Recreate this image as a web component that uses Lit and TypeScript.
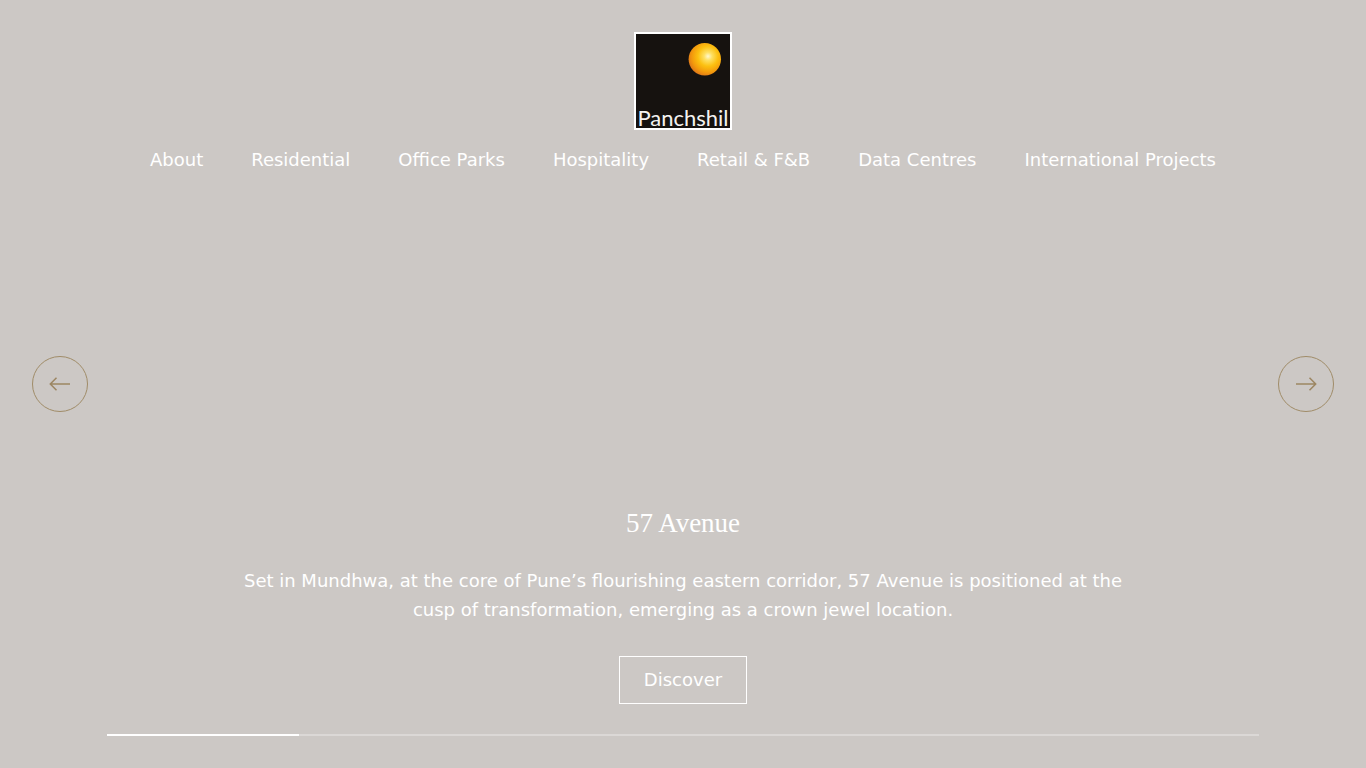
import { LitElement, html, css, svg } from "lit";
import { customElement, state } from "lit/decorators.js";

const LINKS = [
  "About",
  "Residential",
  "Office Parks",
  "Hospitality",
  "Retail & F&B",
  "Data Centres",
  "International Projects",
];

const SLIDE_COUNT = 6;

@customElement("site-header")
class SiteHeader extends LitElement {
  static styles = css`
    :host {
      display: block;
      padding-top: 32px;
    }
    .home {
      display: block;
      width: 98px;
      margin: 0 auto;
    }
    .logo {
      display: block;
      width: 98px;
      height: 98px;
    }
    .wordmark {
      font-family: Lato, "Open Sans", sans-serif;
      font-size: 22px;
      fill: #f4f2f0;
    }
    .links {
      display: flex;
      flex-wrap: wrap;
      justify-content: center;
      column-gap: 48px;
      margin: 16px 0 0;
      padding: 0;
      list-style: none;
      line-height: 28px;
    }
    .link {
      color: #fff;
      font-size: 18px;
      text-decoration: none;
    }
  `;

  render() {
    return html`
      <a class="home" href="#" aria-label="Panchshil home">
        <svg class="logo" viewBox="0 0 98 98" aria-hidden="true">
          <defs>
            <radialGradient id="sun" cx="0.6" cy="0.41" r="0.62">
              <stop offset="0" stop-color="#fff8d0" />
              <stop offset="0.2" stop-color="#fee063" />
              <stop offset="0.5" stop-color="#fcc010" />
              <stop offset="0.8" stop-color="#f39a0c" />
              <stop offset="1" stop-color="#e07a18" />
            </radialGradient>
          </defs>
          <rect width="98" height="98" fill="#fff" />
          <rect x="2" y="2" width="94" height="94" fill="#16120f" />
          <circle cx="70.8" cy="27.2" r="16.2" fill="url(#sun)" />
          <text class="wordmark" x="49" y="94" text-anchor="middle">Panchshil</text>
        </svg>
      </a>
      <nav aria-label="Main">
        <ul class="links">
          ${LINKS.map((t) => html`<li><a class="link" href="#">${t}</a></li>`)}
        </ul>
      </nav>
    `;
  }
}

@customElement("app-root")
class AppRoot extends LitElement {
  static styles = css`
    :host {
      display: block;
      font-family: "DejaVu Sans", sans-serif;
      font-size: 18px;
      color: #fff;
      background: #ccc8c5;
    }
    .hero {
      position: relative;
      box-sizing: border-box;
      min-height: 100vh;
      display: flex;
      flex-direction: column;
      justify-content: space-between;
      padding-bottom: 32px;
    }
    .slide {
      display: flex;
      flex-direction: column;
      align-items: center;
      padding: 0 107px;
      text-align: center;
    }
    .title {
      margin: 0;
      font-family: "Liberation Serif", serif;
      font-size: 27px;
      font-weight: 400;
      line-height: 34px;
    }
    .copy {
      max-width: 900px;
      margin: 26px 0 32px;
      line-height: 29px;
    }
    .discover {
      padding: 0 24px;
      border: 1px solid #fff;
      color: inherit;
      line-height: 46px;
      text-decoration: none;
    }
    .track {
      align-self: stretch;
      height: 2px;
      margin-top: 30px;
      background: #dbd8d6;
    }
    .bar {
      height: 2px;
      background: #fff;
    }
    .arrows {
      position: absolute;
      inset: 0 32px;
      display: flex;
      align-items: center;
      justify-content: space-between;
      pointer-events: none;
    }
    .arrow {
      display: grid;
      place-items: center;
      box-sizing: border-box;
      width: 56px;
      height: 56px;
      padding: 0;
      border: 1px solid #a08c68;
      border-radius: 50%;
      background: none;
      color: #9c8662;
      cursor: pointer;
      pointer-events: auto;
    }
    .glyph {
      display: block;
      width: 24px;
      height: 24px;
      fill: none;
      stroke: currentColor;
      stroke-width: 1.5;
    }
  `;

  @state() private index = 0;

  private step(by: number) {
    this.index = (this.index + by + SLIDE_COUNT) % SLIDE_COUNT;
  }

  render() {
    const left = svg`<path d="M22 12H2.500M8.500 5.800L2.300 12L8.500 18.200" />`;
    const right = svg`<path d="M2 12H21.500M15.500 5.800L21.700 12L15.500 18.200" />`;
    return html`
      <main class="hero">
        <site-header></site-header>
        <section class="slide">
          <h1 class="title">57 Avenue</h1>
          <p class="copy">
            Set in Mundhwa, at the core of Pune’s flourishing eastern corridor, 57 Avenue is positioned at the cusp of
            transformation, emerging as a crown jewel location.
          </p>
          <a class="discover" href="#">Discover</a>
          <div class="track">
            <div class="bar" style="width:${((this.index + 1) / SLIDE_COUNT) * 100}%"></div>
          </div>
        </section>
        <div class="arrows">
          <button class="arrow" aria-label="Previous slide" @click=${() => this.step(-1)}>
            <svg class="glyph" viewBox="0 0 24 24" aria-hidden="true">${left}</svg>
          </button>
          <button class="arrow" aria-label="Next slide" @click=${() => this.step(1)}>
            <svg class="glyph" viewBox="0 0 24 24" aria-hidden="true">${right}</svg>
          </button>
        </div>
      </main>
    `;
  }
}
